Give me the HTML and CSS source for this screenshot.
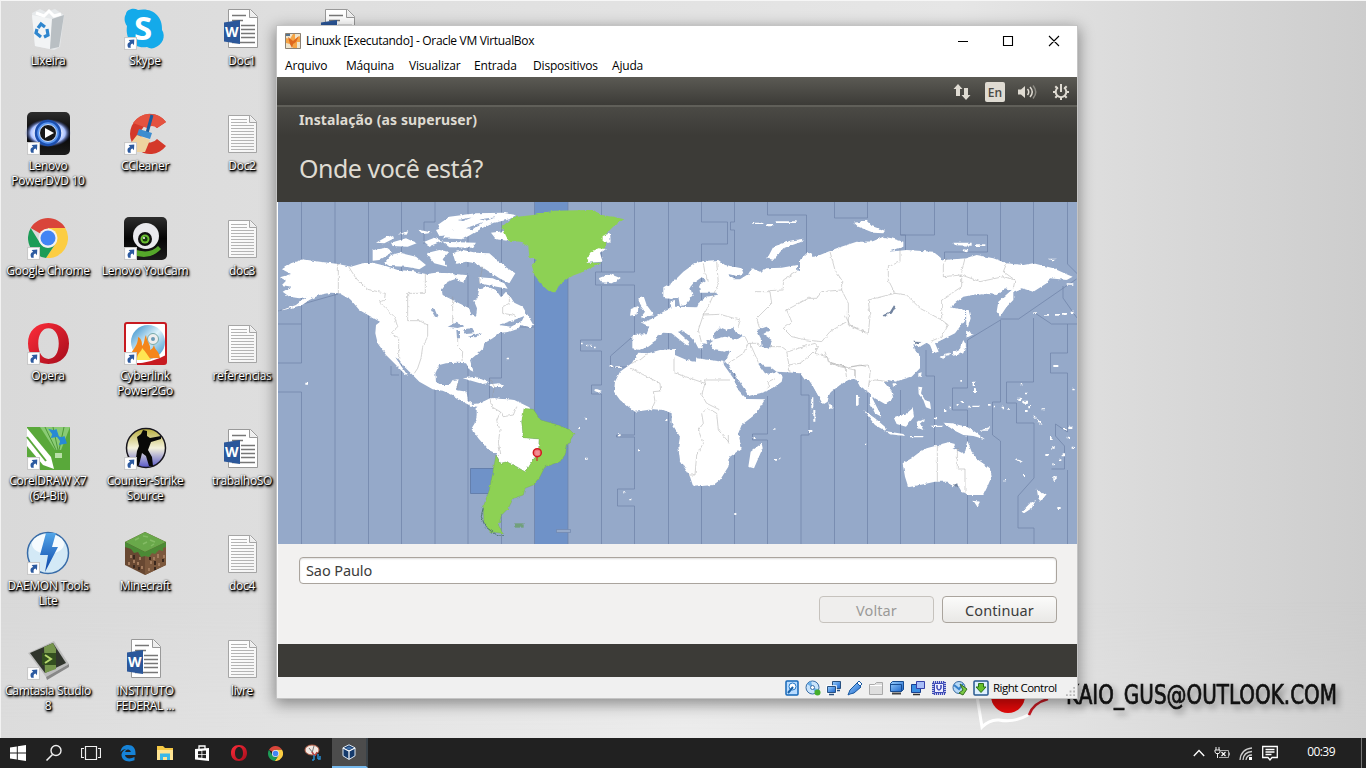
FILE: index.html
```html
<!DOCTYPE html>
<html lang="pt-BR">
<head>
<meta charset="utf-8">
<title>Linuxk [Executando] - Oracle VM VirtualBox</title>
<link rel="stylesheet" href="styles.css">
</head>
<body>
<svg class="defs" width="0" height="0">
  <defs>
    <linearGradient id="gPaper" x1="0" y1="0" x2="1" y2="1"><stop offset="0" stop-color="#fff"/><stop offset="1" stop-color="#f3f3f3"/></linearGradient>
    <linearGradient id="gBlack" x1="0" y1="0" x2="0" y2="1"><stop offset="0" stop-color="#2d2d2d"/><stop offset=".5" stop-color="#050505"/><stop offset="1" stop-color="#1d1d1d"/></linearGradient>
    <linearGradient id="gOpera" x1="0" y1="0" x2="1" y2="1"><stop offset="0" stop-color="#ff2d3a"/><stop offset="1" stop-color="#a50c1b"/></linearGradient>
    <radialGradient id="gEye"><stop offset=".5" stop-color="#fff"/><stop offset=".75" stop-color="#a9c0ff"/><stop offset="1" stop-color="#2b3f90" stop-opacity="0"/></radialGradient>
    <linearGradient id="gCs" x1="0" y1="0" x2="0" y2="1"><stop offset="0" stop-color="#b8ad3c"/><stop offset=".5" stop-color="#f4f2dc"/><stop offset="1" stop-color="#5656c8"/></linearGradient>
    <linearGradient id="gBolt" x1="0" y1="0" x2="0" y2="1"><stop offset="0" stop-color="#53a6e8"/><stop offset="1" stop-color="#0a43a8"/></linearGradient>
    <linearGradient id="gDisc" x1="0" y1="0" x2="1" y2="1"><stop offset="0" stop-color="#2586c7"/><stop offset=".5" stop-color="#dff3fb"/><stop offset="1" stop-color="#2b8dca"/></linearGradient>
    <linearGradient id="gBlue" x1="0" y1="0" x2="1" y2="1"><stop offset="0" stop-color="#9bd0ff"/><stop offset="1" stop-color="#1560c8"/></linearGradient>
    <symbol id="shortcut" viewBox="0 0 12 12"><rect x=".5" y=".5" width="11" height="11" fill="#fff" stroke="#c9c9c9"/><path d="M4 10C2.500 7 3.500 5 5.700 4.600L4.300 2.800 9.500 2.200 9.200 7.500 7.900 6C6 6.300 5.800 7.800 6.300 10Z" fill="#2c5aa0"/></symbol>
    <symbol id="txt" viewBox="0 0 48 48"><path d="M10.500 5.500h22l6 6v31h-28z" fill="url(#gPaper)" stroke="#a5a5a5"/><path d="M31.500 5.500v7h7" fill="#eee" stroke="#a5a5a5"/><path d="M13 9.500h16M13 12.500h16M13 15.500h23M13 18.500h23M13 21.500h23M13 24.500h23M13 27.500h23M13 30.500h23M13 33.500h23M13 36.500h23M13 39.500h23" stroke="#b4b4b4"/></symbol>
    <symbol id="doc" viewBox="0 0 48 48"><path d="M10.500 4.500h22l7 7v31h-29z" fill="#fff" stroke="#999"/><path d="M31.500 4.500v8h8" fill="#eee" stroke="#999"/><path d="M14 10.500h14M14 15.500h11M23 20.500h14M23 24.500h14M23 28.500h14M23 32.500h14M14 37.500h23" stroke="#777" stroke-width="1.500"/><path d="M6 17.500l16-2.500v24l-16-2.500z" fill="#2b579a"/><text x="7" y="32" class="wordmark">W</text></symbol>
    <symbol id="chrome" viewBox="0 0 40 40"><path d="M20 20L2.700 10A20 20 0 0 1 37.300 10H20Z" fill="#d9453a"/><path d="M20 10H37.300A20 20 0 0 1 18 40L28 25Z" fill="#fccd42"/><path d="M2.700 10L12 25A9 9 0 0 0 28 25L18 40A20 20 0 0 1 2.700 10" fill="#1c9c57"/><circle cx="20" cy="20" r="9.500" fill="#f1f1f1"/><circle cx="20" cy="20" r="7.500" fill="#4285f4"/></symbol>
    <symbol id="opera" viewBox="0 0 40 40"><path fill-rule="evenodd" d="M20 0C32 0 40 8 40 20S32 40 20 40 0 32 0 20 8 0 20 0M20 5C14 5 10 11 10 20S14 35 20 35 30 29 30 20 26 5 20 5" fill="url(#gOpera)"/></symbol>
    <filter id="coast" x="0" y="0" width="100%" height="100%" color-interpolation-filters="sRGB"><feTurbulence type="fractalNoise" baseFrequency=".25" numOctaves="2" seed="4" result="n"/><feDisplacementMap in="SourceGraphic" in2="n" scale="3" xChannelSelector="R" yChannelSelector="G"/></filter>
  </defs>
</svg>

<main class="desktop">
  <div class="wall-logo">
    <svg width="80" height="46" viewBox="970 690 80 46"><circle cx="1008" cy="696" r="17" fill="#e60a0a"/><path d="M976 690L982 727Q990 719 999 720 1014 723 1028 715" fill="none" stroke="#fff" stroke-width="3"/><path d="M1029 715Q1033 703 1048 699" fill="none" stroke="#c51b24" stroke-width="2.500"/></svg>
  </div>
  <div class="wall-text"><svg width="300" height="50" viewBox="1060 675 300 50"><text class="hand" x="1066" y="704" textLength="271" lengthAdjust="spacingAndGlyphs">KAIO_GUS@OUTLOOK.COM</text></svg></div>

  <section class="icons">
    <div class="item"><svg viewBox="0 0 48 48"><path d="M8 8l8-4 6 3 9-3 9 6-4 32-6 3-19-4z" fill="#e6e9eb"/><path d="M8 10l20 4-2 30-15-3z" fill="#f2f4f5"/><path d="M28 14l12-4-5 32-9 2z" fill="#b9bfc3"/><path d="M12 8l8 3 5-5 5 5 7-2" fill="none" stroke="#fff" stroke-width="3"/><path d="M14 23l3-4 4 3M23 24l1 6-4 2M17 32l-5-4 1-4" fill="none" stroke="#2f86ce" stroke-width="3.200"/></svg><span>Lixeira</span></div>
    <div class="item"><svg viewBox="0 0 48 48"><path d="M5 9C5 5 12 2 17 5 31 2 42 11 41 25c4 6 1 15-8 18-3 1-5 0-7-1C12 44 4 34 6 21 3 17 3 12 5 9" fill="#14aaea"/><text x="13" y="35" class="skype">S</text><use href="#shortcut" x="3" y="32" width="13" height="13"/></svg><span>Skype</span></div>
    <div class="item"><svg viewBox="0 0 48 48"><use href="#doc"/></svg><span>Doc1</span></div>
    <div class="item"><svg viewBox="0 0 48 48"><use href="#doc"/></svg></div>

    <div class="item"><svg viewBox="0 0 48 48"><rect x="3" y="2" width="43" height="43" rx="5" fill="url(#gBlack)"/><ellipse cx="24" cy="23" rx="23" ry="14" fill="url(#gEye)"/><circle cx="24" cy="23" r="12" fill="#5a97f2" stroke="#1c4fae" stroke-width="2.500"/><circle cx="24" cy="23" r="8.500" fill="#181818" stroke="#cfe2ff"/><path d="M21 18l9 5-9 5z" fill="#fff"/><use href="#shortcut" x="3" y="32" width="13" height="13"/></svg><span>Lenovo<br>PowerDVD 10</span></div>
    <div class="item"><svg viewBox="0 0 48 48"><path d="M45 12A20 20 0 1 0 45 36L36 29A9 9 0 1 1 36 18Z" fill="#d4382a"/><path d="M45 12A20 20 0 0 0 12 13L26 18Q31 14 36 18Z" fill="#e4523f"/><path d="M31 5L26 23" stroke="#1c5c9c" stroke-width="3"/><path d="M18 19l13 4-2 6-13-4z" fill="#3c8dd0"/><path d="M16 25l13 5-5 12H10L6 38z" fill="#eed29f"/><use href="#shortcut" x="3" y="32" width="13" height="13"/></svg><span>CCleaner</span></div>
    <div class="item"><svg viewBox="0 0 48 48"><use href="#txt"/></svg><span>Doc2</span></div>
    <i></i>

    <div class="item"><svg viewBox="0 0 48 48"><use href="#chrome" x="4" y="3" width="40" height="40"/><use href="#shortcut" x="3" y="32" width="13" height="13"/></svg><span>Google Chrome</span></div>
    <div class="item"><svg viewBox="0 0 48 48"><rect x="3" y="2" width="43" height="43" rx="5" fill="url(#gBlack)"/><path d="M10 39Q28 47 40 34L37 31Q29 40 12 34Z" fill="#55a72a"/><circle cx="25" cy="21" r="13" fill="#e9e9ed"/><circle cx="24" cy="24" r="7" fill="#111"/><circle cx="24" cy="24" r="4.500" fill="#69bd31"/><circle cx="24" cy="24" r="2.500" fill="#173b0d"/><circle cx="23" cy="23" r="1" fill="#fff"/><use href="#shortcut" x="3" y="32" width="13" height="13"/></svg><span>Lenovo YouCam</span></div>
    <div class="item"><svg viewBox="0 0 48 48"><use href="#txt"/></svg><span>doc3</span></div>
    <i></i>

    <div class="item"><svg viewBox="0 0 48 48"><use href="#opera" x="4" y="3" width="41" height="41"/><use href="#shortcut" x="3" y="32" width="13" height="13"/></svg><span>Opera</span></div>
    <div class="item"><svg viewBox="0 0 48 48"><rect x="4" y="3" width="41" height="41" rx="2" fill="#fff" stroke="#c71a20" stroke-width="2"/><circle cx="27" cy="22" r="17" fill="url(#gDisc)"/><circle cx="32" cy="19" r="5.500" fill="#eee" stroke="#7aa" stroke-width="1"/><circle cx="32" cy="19" r="2" fill="#6c9bb6"/><path d="M10 39C8 30 17 29 17 17c4 2 4 6 4 9 3-3 2-8 4-11 1 8 5 9 4 15 3-1 3-3 4-5 1 6 5 5 6 13z" fill="#f4861a"/><path d="M16 40c0-8 5-8 5-12 4 4 6 8 9 12z" fill="#ffe552"/><path d="M12 44Q33 42 45 35v9z" fill="#c71a20"/><use href="#shortcut" x="3" y="32" width="13" height="13"/></svg><span>Cyberlink<br>Power2Go</span></div>
    <div class="item"><svg viewBox="0 0 48 48"><use href="#txt"/></svg><span>referencias</span></div>
    <i></i>

    <div class="item"><svg viewBox="0 0 48 48"><path d="M3 2h43v43H3z" fill="#59a83a"/><path d="M16 2h30L37 25h-6z" fill="#8acb74"/><path d="M21 2l11 23M29 2l5 23M40 2l-5 23" stroke="#4d9838"/><path d="M3 3l24 29 3 12-11-4L3 21z" fill="#fff"/><path d="M3 12l19 24" stroke="#59a83a" stroke-width="2"/><path d="M26 5l4 1 2-1 2 6-6 1 1-3zM34 12l4 1 2-1 2 6-6 1 1-3z" fill="#278ad4" stroke="#278ad4" stroke-width="1.500"/><path d="M31 28h7v5h-7z" fill="#b8dfa8"/><use href="#shortcut" x="3" y="32" width="13" height="13"/></svg><span>CorelDRAW X7<br>(64-Bit)</span></div>
    <div class="item"><svg viewBox="0 0 48 48"><circle cx="25" cy="23" r="19.500" fill="url(#gCs)" stroke="#17151d" stroke-width="1.500"/><path d="M22 5l4 1v5l3 2 11-2v3l-10 3-3 8 4 7 1 9h-4l-3-10-4-3-3 12h-4l2-14 2-5-2-9 4-3z" fill="#080808"/><use href="#shortcut" x="3" y="32" width="13" height="13"/></svg><span>Counter-Strike<br>Source</span></div>
    <div class="item"><svg viewBox="0 0 48 48"><use href="#doc"/></svg><span>trabalhoSO</span></div>
    <i></i>

    <div class="item"><svg viewBox="0 0 48 48"><circle cx="24" cy="23" r="20.500" fill="#d3e9f6" stroke="#386ca8" stroke-width="1.500"/><ellipse cx="24" cy="14" rx="16" ry="10" fill="#f5fbfe"/><path d="M22 3h10l-4 14h6L21 42l3-17h-8z" fill="url(#gBolt)"/><use href="#shortcut" x="3" y="32" width="13" height="13"/></svg><span>DAEMON Tools<br>Lite</span></div>
    <div class="item"><svg viewBox="0 0 48 48"><path d="M4 12L24 2l21 10v23L24 45 4 35z" fill="#684832"/><path d="M24 22l21-10v23L24 45z" fill="#7c583d"/><path d="M4 12L24 2l21 10-21 10z" fill="#69a84a"/><path d="M4 12l20 10 21-10v5l-3 1v3l-4-1-4 4-3-1-3 4-4-1-4 1-3-5-4 1-3-4-6-2z" fill="#4b8a35"/><path d="M9 25h2v3H9zM16 32h2v3h-2zM7 32h2v3H7zM18 27h2v3h-2zM12 30h2v3h-2zM20 36h2v3h-2zM29 31h2v3h-2zM36 24h2v4h-2zM37 33h2v3h-2zM27 38h2v3h-2zM42 25h2v3h-2zM32 27h2v3h-2z" fill="#a37b5d"/><path d="M12 25h2v4h-2zM12 35h2v3h-2zM17 37h2v3h-2zM33 31h2v4h-2zM41 29h2v3h-2zM28 27h2v3h-2zM33 37h2v3h-2z" fill="#3b281e"/><path d="M14 10l4-2M22 14l4-2M29 10l5 2M22 6l5 1M30 16l3-2" stroke="#83bb64" stroke-width="1.500"/></svg><span>Minecraft</span></div>
    <div class="item"><svg viewBox="0 0 48 48"><use href="#txt"/></svg><span>doc4</span></div>
    <i></i>

    <div class="item"><svg viewBox="0 0 48 48"><path d="M4 18l26-12 15 23-23 13z" fill="#bdbdbd"/><path d="M22 42l23-13v3L23 45z" fill="#888"/><path d="M6 18l23-10 13 20-21 10z" fill="#30352c"/><path d="M20 12l9-4 3 6v20l-11 4z" fill="#75954c"/><path d="M18 18h14v12H18z" fill="#334f1f"/><path d="M21 20l6 4-6 4" fill="none" stroke="#b8d96e" stroke-width="2"/><use href="#shortcut" x="3" y="32" width="13" height="13"/></svg><span>Camtasia Studio<br>8</span></div>
    <div class="item"><svg viewBox="0 0 48 48"><use href="#doc"/></svg><span>INSTITUTO<br>FEDERAL ...</span></div>
    <div class="item"><svg viewBox="0 0 48 48"><use href="#txt"/></svg><span>livre</span></div>
    <i></i>
  </section>

  <section class="window">
    <header class="titlebar">
      <svg class="vm" width="16" height="16" viewBox="0 0 16 16"><path d="M.5.500h15v15H.500z" fill="#f6a546" stroke="#8b8175"/><path d="M1 1h7l-3 5-4-1zM10 1h5v2l-5 3zM1 10l4 1 3 4H1zM12 9h3v6h-3z" fill="#eee4cc"/><path d="M3 4l5 4 6-5-3 6-3 2-1 4-2-4z" fill="#df681e"/><path d="M1 1h4v2H1z" fill="#57738c"/></svg>
      <span class="title">Linuxk [Executando] - Oracle VM VirtualBox</span>
      <svg class="controls" width="110" height="20" viewBox="0 0 110 20"><path d="M5 10.500h10M50.500 5.500h9v9h-9zM96 5l10 10M106 5L96 15" fill="none" stroke="#000" stroke-width="1.100"/></svg>
    </header>
    <nav class="menu"><span class="m1">Arquivo</span><span class="m2">Máquina</span><span class="m3">Visualizar</span><span class="m4">Entrada</span><span class="m5">Dispositivos</span><span class="m6">Ajuda</span></nav>
    <div class="panel">
      <svg width="18" height="18" viewBox="0 0 18 18"><path d="M5 1l4.500 5H7v7H3V6H.500zM13 17l-4.500-5H11V5h4v7h2.500z" fill="#dfdbd2"/></svg>
      <b class="lang">En</b>
      <svg width="20" height="18" viewBox="0 0 20 18"><path d="M1 6.500h3l4-3.500v12l-4-3.500H1z" fill="#dfdbd2"/><path d="M10.500 6q2.500 3 0 6M13 4q4.500 5 0 10" fill="none" stroke="#dfdbd2" stroke-width="1.500"/><path d="M16 2.500q5.500 6.500 0 13" fill="none" stroke="#8c8a83" stroke-width="1.500"/></svg>
      <svg width="18" height="18" viewBox="0 0 18 18"><path d="M6 4.500a5.300 5.300 0 1 0 6 0" fill="none" stroke="#dfdbd2" stroke-width="2"/><path d="M9 1v8M1 9h3M14 9h3M9 14v3M3.300 3.300l2 2M14.700 3.300l-2 2M3.300 14.700l2-2M14.700 14.700l-2-2" stroke="#dfdbd2" stroke-width="2"/></svg>
    </div>
    <div class="installer">
      <h1>Instalação (as superuser)</h1>
      <h2>Onde você está?</h2>
    </div>
    <svg class="map" width="799" height="342" viewBox="278 202 799 342">
      <path d="M278 202h799v342H278z" fill="#95a9c9"/>
      <path d="M534.500 202H568v342H534.500z" fill="#6f92c8"/>
      <path d="M470.500 468.500h32v25h-32z" fill="#6f92c8" stroke="#5873a0" stroke-width=".7"/>
      <g class="zones">
        <path d="M301.500 202v122H278M278 363h23.500v-39M278 392h23.500v152M335 202v342M368.500 202v342M401.500 202v342M435 202v20h-11v22M435 385v159M468 202v342M501.500 202v176h-12v25l12 20v121M534.500 202v342M568 202v342M601.500 202v70M601.500 286v54h-21v11h21v34h-10v9h10v150M634.500 202v70h-39v13h39v50l-24 21v11h24v68h-18v2h18v52h-17v17h17v39M668.500 202v342M701.500 202v20h26v22h-26v300M734.500 202v20h-4v8h4v314M767.500 202v13h39v46M767.500 396v38h-15v6h15v104M801 370v25h8v40h-8v109M834.500 202v16h33v-16M834.500 385v159M867.500 370v174M900.500 202v33h5v15M900.500 235h34v-33M900.500 390v154M926 350v26h8.500v168M967.500 202v33h20v17h-43v15M967.500 340v48h-15v22h15v134M967.500 340l33-20v82h-8v33l8 6v103M1000.500 202v60M1033.500 202v64M1033.500 318v64h-27v21h10v20h17.500v55l-16 18v32h16v16M1000.500 319h18l58-40M1033.500 312l18 12h26M1067.500 202v62l10 10M1063 286v12l14 20M1067.500 324v29h-17v20h17v59l-12-8v12l9 10v23h-13M1067.500 470v74M278 311l60-17M391 366v9h8M520 327h14"/>
      </g>
      <g filter="url(#coast)">
        <g transform="translate(276 200) scale(.33333)" fill="#fff">
          <path d="M18 208L45 190 80 178 120 184 187 192 225 200 260 190 290 188 330 198 365 210 410 214 450 222 480 218 530 220 545 235 515 245 497 270 500 285 530 300 560 315 580 325 585 345 600 350 603 325 595 305 605 290 610 265 635 260 660 270 675 292 690 275 700 285 715 308 740 320 755 345 772 375 765 382 735 375 725 387 700 395 670 400 650 415 625 430 622 445 600 465 582 480 592 515 582 510 570 490 545 488 510 490 490 495 478 520 480 545 495 555 520 555 530 540 548 538 540 570 572 575 575 600 590 612 612 610 610 622 585 618 560 605 530 585 500 572 470 568 430 545 410 525 385 500 370 480 358 472 396 528 386 522 355 490 330 465 305 430 298 400 300 375 312 365 285 350 250 330 225 300 190 280 165 278 130 285 100 300 80 314 40 326 8 333 60 315 92 290 70 295 40 290 20 275 45 260 18 255 30 242 12 232 45 222Z"/>
          <path d="M485 75L520 50 600 40 680 38 720 45 700 58 640 72 600 95 560 118 500 115 530 90 490 88ZM530 160L560 150 600 158 640 160 680 195 718 220 700 250 670 235 640 215 600 190 570 185 540 192ZM610 232L650 235 685 250 695 266 650 258 610 250ZM325 188L345 165 370 158 420 170 450 195 430 208 390 200 340 198ZM290 150L330 143 348 158 310 180 290 182ZM345 128L390 115 422 130 395 140 350 138ZM300 128L340 106 355 115 325 130ZM365 103L397 94 392 104ZM425 88L468 98 440 102ZM445 125L475 113 500 123 460 139ZM450 160L490 150 520 155 500 178 515 200 475 190ZM500 125L600 128 590 143 520 142ZM480 90L540 70 520 105 490 108ZM645 98L685 93 700 123 660 118ZM535 222L570 225 565 248 545 242ZM560 535L600 530 640 548 620 552ZM640 553L670 550 685 560 650 562ZM88 548h8v6h-8zM692 473h7v5h-7zM610 610L650 595 715 600 760 622 780 660H600Z"/>
          <path fill="#95a9c9" d="M515 380L540 368 565 378 545 384ZM541 390h11v25h-9zM560 388L590 385 595 400 570 402ZM575 410L605 402 618 400 600 412ZM465 330L475 325 486 352 477 350ZM670 375L720 358 745 348 738 362 705 380ZM565 205L590 195 612 215 640 225 600 235 575 225ZM545 60L590 52 560 64ZM570 85L620 66 590 88ZM610 58L660 52 630 62Z"/>
        </g>
        <g transform="translate(470 200) scale(.33333)">
          <path fill="#fff" d="M20 615L60 595 130 600 162 625 155 665 160 713 207 717 206 760 180 790 165 815 140 800 110 785 92 790 78 760 55 750 25 715 5 685 20 660Z"/>
          <path fill="#8dd154" d="M95 80L130 52 190 45 250 32 370 30 395 45 430 50 463 58 435 75 410 100 408 140 350 188 395 188 340 215 300 230 268 255 255 278 235 272 210 250 195 230 185 195 200 180 178 170 175 140 150 125 115 122Z"/>
          <path fill="#fff" d="M350 188L360 158 385 145 408 147 390 160 398 185ZM398 108L420 100 422 125 398 125ZM385 235L420 222 452 235 425 250 395 247Z"/>
          <path fill="#8dd154" stroke="#71a54c" stroke-width="1" d="M162 625L190 628 212 660 265 675 300 690 312 702 292 735 285 765 270 785 225 800 210 830 190 855 165 865 160 885 130 895 115 925 95 945 85 975 98 1000 60 995 42 965 40 920 58 870 68 820 78 765 92 790 110 785 140 800 165 815 180 790 206 760 207 717 160 713 155 665Z"/>
          <path fill="#71a07c" d="M133 970h28v13h-28z"/>
          <path fill="none" stroke="#4f7570" stroke-width="3" d="M40 925L34 950 46 980 85 1008 102 1007"/>
          <path fill="#fff" d="M483 327L505 318 503 343 480 347ZM505 295L522 292 530 315 552 345 510 355 525 335 512 318ZM333 428h5v5h-5zM350 434h5v5h-5zM361 434h5v5h-5zM372 440h5v5h-5zM372 572l8-5 15 5-8 6zM346 653h5v6h-5zM325 681h5v6h-5zM345 773h8v6h-8zM444 703h8v6h-8zM501 748h6v6h-6zM460 874h6v6h-6zM478 895h6v6h-6zM422 495h8v6h-8zM436 499h18v5h-18zM793 939h6v6h-6zM586 657h6v6h-6z"/>
        </g>
        <g transform="translate(600 200) scale(.33333)" fill="#fff">
          <path d="M190 290L190 262 220 245 250 215 285 190 310 183 355 180 375 195 425 205 430 220 410 228 385 222 400 238 420 238 445 222 455 205 480 215 500 205 545 203 590 195 592 210 620 222 640 218 640 205 610 210 600 180 620 160 635 160 640 190 660 205 685 200 650 185 655 165 680 168 700 153 730 150 735 140 800 125 870 125V520L840 560 810 580 795 570 775 550 770 535 745 540 720 555 688 580 683 605 672 612 660 595 640 560 635 540 615 540 600 520 560 517 530 515 510 500 495 500 480 488 475 492 495 520 515 522 530 515 548 530 545 545 515 568 480 580 445 588 435 570 410 530 385 495 375 485 392 450 375 455 340 450 330 430 340 422 318 420 322 432 310 430 308 445 295 445 285 425 265 405 245 390 235 397 268 425 262 437 240 420 215 400 190 398 175 405 165 425 145 440 120 450 97 445 97 405 140 403 148 380 125 368 160 355 190 335 215 325 208 305 225 300 225 320 290 322 295 310 320 290 350 285 350 278 300 278 297 255 318 240 305 232 280 250 270 262 278 285 255 315 240 318 235 290 215 297 195 295Z"/>
          <path d="M115 458L145 460 180 450 225 447 225 465 260 480 285 485 290 475 330 480 370 485 372 495 400 535 415 570 440 597 495 598 470 640 425 675 415 700 425 745 390 770 385 800 360 840 340 855 280 860 270 830 240 780 235 740 240 710 215 670 215 640 190 630 160 628 105 635 60 600 42 575 45 545 60 515 95 490ZM485 730L488 745 462 805 445 800 452 755ZM502 175L520 140 570 122 610 116 605 125 550 145 520 180ZM685 605L697 620 690 628ZM460 68h30v4h-30zM500 72h22v4h-22zM530 64h60v5h-60zM634 595h6v30h-6zM640 630h6v35h-6zM628 690h9v6h-9zM520 684h6v6h-6zM535 772h6v6h-6zM522 777h6v5h-6zM461 711h6v6h-6zM770 590h6v25h-6z"/>
          <path fill="#95a9c9" d="M342 400L360 382 380 390 400 383 407 397 432 410 410 418 375 410 343 418ZM470 390L500 380 510 390 490 402 515 420 510 446 485 440 482 415Z"/>
        </g>
        <g transform="translate(820 200) scale(.33333)" fill="#fff">
          <path d="M0 165L50 145 110 125 155 125 190 110 215 115 250 125 250 140 205 155 260 150 340 155 370 180 440 175 470 165 520 175 560 190 610 195 640 190 700 205 745 225 758 230 740 240 690 235 680 250 640 275 605 265 580 275 580 300 560 320 540 350 530 335 535 305 575 270 555 265 530 285 485 280 430 290 390 322 435 330 435 360 405 400 365 420 345 430 356 455 340 460 330 435 320 428 300 440 280 432 285 450 300 470 300 505 275 530 225 545 205 540 195 550 215 575 220 595 195 612 165 595 155 590 170 620 187 652 165 640 150 610 150 580 140 565 120 560 110 540 85 530 70 540 35 570 20 600 8 612-20 560-60 500V180Z"/>
          <path d="M248 790L275 775 300 755 320 745 345 738 355 742 365 732 385 727 405 732 398 745 425 758 435 755 442 722 455 755 475 780 510 805 515 830 500 865 490 885 450 885 425 875 412 853 398 862 385 845 345 845 300 855 265 862 255 830ZM460 902L480 905 472 920ZM650 865L665 880 680 882 662 905 655 895ZM648 900L635 925 612 940 605 935 630 910ZM130 630L165 655 200 685 195 692 165 675ZM195 693L250 702 255 708 210 703ZM222 655L260 640 278 625 282 650 258 680 230 672ZM290 665L305 660 318 658 300 670 310 690 295 685ZM370 668L395 670 440 680 465 695 495 718 460 708 430 705 400 690ZM480 692L510 680 505 692ZM295 560L307 562 303 580 315 600 330 605 333 628 318 622 310 600 296 582ZM295 520L305 517 302 535 295 530ZM218 550h14l-5 9-9-3zM438 330L446 330 452 355 444 382 439 378ZM438 392L462 402 440 413ZM430 420L438 435 430 460 400 467 393 460 420 446ZM362 470L375 465 370 478ZM372 462L390 458 388 466 374 467ZM102 68L140 62 155 78 195 92 190 100 160 98 115 80ZM400 128L455 128 455 137 405 136ZM468 133h28v5h-28zM430 148l18 3-8 6-12-4zM685 176l22 0-5 6zM270 708h40v4h-40zM335 677h35v4h-35zM740 250h20v4h-20zM108 585h6v32h-6zM28 610l10 14-8 4z"/>
          <path d="M422 603h10v6h-10zM410 612h6v5h-6zM445 617h7v6h-7zM460 617h18v4h-18zM504 612h8v5h-8zM520 617h5v5h-5zM545 620h7v5h-7zM565 624h5v5h-5zM595 596h9v7h-9zM610 602h14v9h-14zM625 618h8v7h-8zM615 630h8v6h-8zM640 645l10 8 18 22-8-3-18-22zM665 625h10v6h-10zM690 708h8v12h-8zM676 762h9v6h-9zM697 740h7v6h-7zM725 760h10v9h-10zM719 775h8v8h-8zM697 790h6v6h-6zM700 828h7v14h-7zM745 677h12v10h-12zM728 684h12v5h-12zM740 710h10v5h-10zM755 740h7v6h-7zM588 775l17 10-3 3-17-10zM610 822h5v6h-5zM551 840h5v6h-5zM700 495h15v6h-15zM712 921h10v6h-10zM640 337h11v5h-11zM675 342h12v5h-12zM705 342h12v5h-12zM726 339h15v5h-15zM752 335h12v5h-12zM458 545h7v12h-7zM462 565h6v14h-6zM421 540h5v5h-5zM600 551h7v5h-7zM615 578h6v5h-6zM757 566h7v5h-7zM372 630h7v6h-7zM387 620h6v5h-6zM345 653h6v5h-6zM135 728h5v5h-5z"/>
          <path fill="#71839f" d="M188 346L210 335 222 316 226 320 217 338 192 350ZM280 425L308 426 285 432ZM400 855L412 850 412 863Z"/>
        </g>
        <g class="borders" transform="translate(276 200) scale(.33333)"><path d="M187 190V280M218 200L240 235 275 268 328 280 325 302 310 305 355 350 365 380 345 400 368 415V480M448 222V280H395V362H430L455 375 455 410 440 440 435 475 425 505 415 520M530 290V370M545 415L545 440 560 455 558 485M700 280L700 310 680 320 680 340 710 345 720 350M545 550V570M640 535L655 560 650 590M610 250L620 200"/></g>
        <g class="borders" transform="translate(470 200) scale(.33333)"><path d="M60 597L65 620 90 635 80 660 90 690 85 730 92 760 82 770M90 635L100 650 130 645 140 620M483 505L570 550 572 573 550 575 555 605 545 628M612 475V518L705 550V540H780M705 550L695 585 710 610 750 630M700 635L715 625 740 640 745 690 775 725M695 640L700 670 685 690 700 730 680 765 675 825 655 825M775 730V705M485 490L510 480 535 460"/></g>
        <g class="borders" transform="translate(600 200) scale(.33333)"><path d="M310 190L315 220 325 245M350 185L355 250 340 285M340 285L325 320 310 345 295 390 305 430M310 345L360 343 420 360 415 380M465 275L510 275 515 310 470 355 480 385M505 272L550 270 550 240 590 215M690 155L705 210 725 240 725 270 665 275 650 295 625 295 560 330 575 365 550 385 575 410 620 420 665 425 690 395 740 365M725 270L745 310 745 375 800 400M435 410L445 430 475 430 480 440M445 430L430 460 385 490M450 430L470 475 475 488M510 440L545 440 565 455 610 440 645 430 655 440 625 470 600 490 565 495M560 455L570 517M655 440L645 460 680 470 695 490 745 503 780 495 800 500M690 490L720 500 765 510 765 535M505 565L505 545 525 535"/></g>
        <g class="borders" transform="translate(820 200) scale(.33333)"><path d="M240 145L240 185 205 200 205 240 225 280 185 290 145 300 150 350 145 400 90 375 75 345M225 280L260 285 300 325 365 360 385 375 365 410 330 425M365 360L365 300 425 260 425 225 370 230 370 195 380 175M425 225L480 245 550 230 585 240 580 265M560 190L550 215 585 240M435 175L425 215M352 740V845M412 745V807H435V878M148 545L165 540 205 545M85 500L145 495 150 520 145 565M15 455L25 485 75 500 80 535M105 505V530"/></g>
      </g>
      <path d="M556.500 529.500h14v3h-14z" fill="#95a9c9" stroke="#6d83a9" stroke-width=".6"/>
      <path d="M537 455v6" stroke="#d21a20"/><circle cx="537.300" cy="452.700" r="4" fill="#ee767c" stroke="#d21a20" stroke-width="1.500"/><path d="M535.500 452h4M535.500 454h4" stroke="#f7c2c4" stroke-width=".7"/>
    </svg>
    <div class="form">
      <div class="field">Sao Paulo</div>
      <div class="actions"><button class="off">Voltar</button><button>Continuar</button></div>
    </div>
    <div class="dark"></div>
    <footer class="status">
      <svg viewBox="0 0 16 16"><rect x="2" y="1" width="12" height="14" rx="1" fill="#b9dcff" stroke="#1567b8" stroke-width="1.500"/><circle cx="8.500" cy="6.500" r="3.500" fill="#fff" stroke="#2279c9"/><path d="M4 13l5-6" stroke="#1761a8" stroke-width="2"/></svg>
      <svg viewBox="0 0 16 16"><circle cx="7.500" cy="7.500" r="6.500" fill="#c8e3fb" stroke="#3a6ea5"/><path d="M7.500 7.500L2 4l4-3zM7.500 7.500l6 2-3 4z" fill="#69ade8"/><circle cx="7.500" cy="7.500" r="2" fill="#fff" stroke="#3a6ea5"/><circle cx="12.500" cy="12.500" r="3" fill="#45ae2c"/></svg>
      <svg viewBox="0 0 16 16"><path d="M6.500 1.500h8v7h-8z" fill="url(#gBlue)" stroke="#285080"/><path d="M1.500 6.500h8v6h-8z" fill="url(#gBlue)" stroke="#fff" stroke-width="2.500"/><path d="M1.500 6.500h8v6h-8z" fill="url(#gBlue)" stroke="#285080"/><path d="M3 14.500h5M11 10.500h3" stroke="#285080" stroke-width="1.500"/></svg>
      <svg viewBox="0 0 16 16"><path d="M1 15l2-5 7-7 4 4-7 6-4 1z" fill="url(#gBlue)" stroke="#1858a0"/><path d="M10 3l2-2 3 3-2 2z" fill="#fff" stroke="#1858a0"/></svg>
      <svg viewBox="0 0 16 16"><path d="M1.500 14.500v-10h5l2-2h6v12z" fill="#dedede" stroke="#aaa"/><path d="M2 5.500h12" stroke="#fff"/></svg>
      <svg viewBox="0 0 16 16"><path d="M1.500 3.500l2-2h11v8l-2 2h-11z" fill="url(#gBlue)" stroke="#174b8f"/><path d="M1.500 4.500h11v7" fill="none" stroke="#174b8f"/><path d="M3 13.500h9" stroke="#444" stroke-width="2"/></svg>
      <svg viewBox="0 0 16 16"><path d="M1.500 4.500h9v8h-9z" fill="#3a8de0" stroke="#183f8f"/><path d="M6.500 1.500h8v7h-8z" fill="#a8bdf7" stroke="#3640a8"/><path d="M3 14.500h7" stroke="#333" stroke-width="1.500"/></svg>
      <svg viewBox="0 0 16 16"><path d="M2 2h12v12H2z" fill="#dfe4ff" stroke="#3b48b4" stroke-width="2" stroke-dasharray="1.200 .8"/><path d="M3.500 3.500h9v9h-9z" fill="#eef" stroke="#3b48b4"/><path d="M6 5v3q2 4 4 0V5" fill="none" stroke="#3b48b4" stroke-width="1.500"/></svg>
      <svg viewBox="0 0 16 16"><circle cx="7" cy="7.500" r="6" fill="#b5d8f6" stroke="#396aa0"/><path d="M2 5l5 4 4-5" fill="none" stroke="#3781ca" stroke-width="2"/><path d="M8 4l7 5-4 6-4-2 4-3z" fill="#79c843" stroke="#376d20"/></svg>
      <svg viewBox="0 0 16 16"><rect x="1" y="1" width="14" height="14" rx="1" fill="#dff0ff" stroke="#275890" stroke-width="1.500"/><path d="M5.500 3.500h5V7H13l-5 5.500L3 7h2.500z" fill="#66bf2b" stroke="#2b7218"/></svg>
      <span>Right Control</span>
      <svg class="grip" viewBox="0 0 10 10"><path d="M8 0h2v2H8zM4 4h2v2H4zM8 4h2v2H8zM0 8h2v2H0zM4 8h2v2H4zM8 8h2v2H8z" fill="#b5b5b5"/></svg>
    </footer>
  </section>
</main>

<footer class="taskbar">
  <div class="tb"><svg width="18" height="18" viewBox="0 0 18 18"><path d="M1 3.500L7.800 2.500V8.500H1zM8.800 2.300L17 1v7.500H8.800zM1 9.500h6.800v6L1 14.500zM8.800 9.500H17V17l-8.200-1.300z" fill="#fff"/></svg></div>
  <div class="tb"><svg width="18" height="18" viewBox="0 0 18 18"><circle cx="11" cy="6.500" r="5" fill="none" stroke="#eee" stroke-width="1.400"/><path d="M7.500 10.500L1.500 16.500" stroke="#eee" stroke-width="1.600"/></svg></div>
  <div class="tb"><svg width="20" height="18" viewBox="0 0 20 18"><path d="M4.500 2.500h11v13h-11zM3 4.500H.500v9H3M17 4.500h2.500v9H17" fill="none" stroke="#eee" stroke-width="1.200"/></svg></div>
  <div class="tb"><svg width="18" height="18" viewBox="0 0 18 18"><path d="M1.500 8C2 3.500 5 1 9 1c5 0 7.500 3.500 7.500 8v2H6c.5 4 5.500 4.200 9.500 2v3.300C9 19 2.300 16.500 2.500 10.500 3 7.500 5 5.800 7.500 5 5 5 3 6 1.500 8M6.200 8h5.600C11.500 4.500 6.500 4.500 6.200 8" fill="#1683d8" fill-rule="evenodd"/></svg></div>
  <div class="tb"><svg width="18" height="18" viewBox="0 0 18 18"><path d="M1 2h6l2 2h8v12H1z" fill="#f6c945"/><path d="M1 6h16v10H1z" fill="#ffe593"/><path d="M4 16V9.500h10V16h-3v-3H7v3z" fill="#39b8e8"/></svg></div>
  <div class="tb"><svg width="18" height="18" viewBox="0 0 18 18"><path d="M6 5V2h6v3" fill="none" stroke="#fff" stroke-width="1.300"/><path d="M2 5l14-1v13L2 15.500z" fill="#fff"/><path d="M5 7.200l3.500-.3v3H5zM9.300 6.800l3.700-.3v3.400H9.300zM5 10.800h3.500v3L5 13.500zM9.300 10.800H13v3.400l-3.700-.3z" fill="#222"/></svg></div>
  <div class="tb"><svg width="16" height="16"><use href="#opera" width="16" height="16"/></svg></div>
  <div class="tb"><svg width="15" height="15"><use href="#chrome" width="15" height="15"/></svg></div>
  <div class="tb"><svg width="18" height="18" viewBox="0 0 18 18"><ellipse cx="8" cy="6" rx="7" ry="5" fill="#f3e8e2" stroke="#b45d45"/><path d="M5 4l4 5M10 2L8 9" stroke="#777"/><path d="M8 8l2 3M13 8l-2 4" stroke="#b44" stroke-width="1.500"/><path d="M10 11v5M14 10v5M10 16h-2M14 15h2v-3" fill="none" stroke="#2a8ccf" stroke-width="1.500"/></svg></div>
  <div class="tb active"><svg width="16" height="16" viewBox="0 0 16 16"><path d="M8 .8l6 3v8l-6 3.700-6-3.700v-8z" fill="#153a6b" stroke="#dce8f5"/><path d="M2 4l6 3 6-3M8 7v8" fill="none" stroke="#fff" stroke-width="1.200"/><path d="M8 2.500l3.500 1.700L8 5.800 4.500 4.200z" fill="#3e6ea8"/></svg></div>
  <div class="tray">
    <svg width="12" height="16" viewBox="0 0 12 16"><path d="M.8 11L6 5.500 11.200 11" fill="none" stroke="#fff" stroke-width="1.300"/></svg>
    <svg width="16" height="16" viewBox="0 0 16 16"><path d="M2 2v3M5 2v3M1 5h5v2L5 8.500H2L1 7zM3.500 8v5" fill="none" stroke="#eee"/><path d="M6 5.500h8.500v7H5M15.500 7.500v3" fill="none" stroke="#aaa"/><path d="M7.500 7l4 4M11.500 7l-4 4" stroke="#fff" stroke-width="1.100"/></svg>
    <svg width="14" height="16" viewBox="0 0 14 16"><path d="M1 15Q2 4 13 3M4 15Q4.500 7 13 6.500M7 15q.5-5 6-5" fill="none" stroke="#ccc" stroke-width="1.300"/><path d="M10 12h3v3h-3z" fill="#fff"/></svg>
    <svg width="16" height="18" viewBox="0 0 16 18"><path d="M.700 2.500h14.600v11H10L8 16l-2-2.500H.700zM3.500 5.500h9M3.500 8h9M3.500 10.500h6" fill="none" stroke="#fff" stroke-width="1.300"/></svg>
    <time>00:39</time>
  </div>
</footer>
</body>
</html>
```
FILE: styles.css
```css
* { box-sizing: border-box; }
body { margin: 0; width: 1366px; height: 768px; overflow: hidden; display: flex; flex-direction: column; font-family: "Open Sans", "Noto Sans", sans-serif; }
.defs { position: absolute; }
.desktop { position: relative; height: 738px; border-top: 1px solid #f6f6f6; border-left: 1px solid #f2f2f2; background: linear-gradient(90deg, #d9d9d9 0, #dedede 20%, #e6e6e6 70%, #dadada 84%, #cdcdcd 100%); }
.desktop::before { content: ""; position: absolute; inset: 600px 0 0 0; background: linear-gradient(90deg, #dcdcdc, #ececec 50%, #e2e2e2 78%, #d0d0d0); -webkit-mask-image: linear-gradient(transparent, #000); mask-image: linear-gradient(transparent, #000); }
.wall-logo { position: absolute; left: 969px; top: 689px; }
.wall-text { position: absolute; left: 1059px; top: 674px; }
.hand { font: 400 26px "DejaVu Sans Condensed", "DejaVu Sans", sans-serif; fill: #111; stroke: #111; stroke-width: .7px; filter: drop-shadow(3px 4px 3px #0006); }
.icons { position: relative; display: grid; width: 388px; grid-template-columns: repeat(4, 97px); grid-auto-rows: 105px; margin-left: -1px; padding-top: 4px; }
.item { display: flex; flex-direction: column; align-items: center; }
.item svg { width: 48px; height: 48px; flex: none; margin-left: -1px; }
.item span { margin-left: -1px; font-size: 12px; line-height: 15px; letter-spacing: -.32px; text-align: center; white-space: nowrap; color: #fff; text-shadow: 1px 1px 1px #000, 1px 1px 2px #000, 1px 2px 3px #000, 0 0 2px #0009; }
.wordmark { font: bold 14px "Open Sans", sans-serif; fill: #fff; }
.skype { font: bold 33px "Open Sans", sans-serif; fill: #fff; }

.window { position: absolute; left: 276px; top: 25px; width: 800px; height: 672px; display: flex; flex-direction: column; align-items: stretch; background: #fff; box-shadow: 0 0 0 1px #c4c4c4, 0 4px 14px 2px #0006; }
.titlebar { height: 29px; display: flex; align-items: center; padding: 0 14px 0 8px; }
.title { margin-left: 5px; font-size: 12px; letter-spacing: -.32px; color: #000; }
.controls { margin-left: auto; }
.menu { height: 22px; display: flex; align-items: center; padding: 0 0 1px 8px; font-size: 12px; color: #000; letter-spacing: -.18px; }
.menu span { white-space: nowrap; }
.m1 { width: 61px; } .m2 { width: 63px; } .m3 { width: 65px; } .m4 { width: 59px; } .m5 { width: 79px; }
.panel { height: 28px; display: flex; align-items: center; justify-content: flex-end; gap: 15px; padding: 2px 7px 0 0; background: linear-gradient(#5b5a54, #3c3b37); }
.lang { width: 20px; height: 20px; margin: 0 -3px 0 -1px; border-radius: 2px; background: #dfdbd2; color: #4a4944; font: 600 12px/21px "Open Sans", sans-serif; text-align: center; }
.installer { height: 97px; padding: 3px 22px; border-top: 2px solid #605f59; background: linear-gradient(#4b4a45, #3c3b37 28px); color: #dfdbd2; }
.installer h1 { margin: 0; font: 700 14px/20px "Noto Sans", sans-serif; letter-spacing: .1px; }
.installer h2 { margin: 21px 0 0; font: 400 25px/34px "Noto Sans", sans-serif; letter-spacing: -.5px; }
.map { display: block; flex: none; margin-left: 1px; }
.zones path { fill: none; stroke: #6d81a6; stroke-width: .7; }
.borders path { fill: none; stroke: #999; stroke-width: 1.300; }
.form { height: 100px; margin-left: 1px; padding: 13px 20px 0 21px; background: #f2f1f0; }
.field { height: 27px; border: 1px solid #aaa49d; border-radius: 4px; background: #fff; box-shadow: inset 0 1px 2px #0002; padding-left: 6px; font: 14.500px/25px "Noto Sans", sans-serif; letter-spacing: -.1px; color: #3c3c3c; }
.actions { display: flex; justify-content: flex-end; gap: 8px; margin-top: 12px; }
.actions button { width: 115px; height: 27px; padding: 0; border: 1px solid #aaa49d; border-radius: 4px; background: linear-gradient(#fbfbfa, #e9e8e6); font: 14.500px/24px "Noto Sans", sans-serif; letter-spacing: .1px; color: #3c3c3c; }
.actions .off { background: #efeeed; border-color: #c6c2bd; color: #9b9a98; }
.dark { height: 33px; margin-left: 1px; background: #3c3b37; }
.status { flex: 1; display: flex; align-items: center; justify-content: flex-end; gap: 5px; padding-right: 2px; background: #f0f0f0; font-size: 11.500px; letter-spacing: -.5px; }
.status svg { width: 16px; height: 16px; flex: none; }
.status span { width: 66px; margin-right: 3px; margin-left: -1px; white-space: nowrap; }
.status .grip { width: 9px; height: 9px; align-self: flex-end; margin-bottom: 2px; margin-left: -1px; }

.taskbar { position: relative; height: 30px; background: #212121; display: flex; align-items: stretch; }
.tb { width: 37px; display: flex; align-items: center; justify-content: center; }
.tb:first-child { width: 35px; }
.tb.active { width: 36px; margin-left: 1px; background: #4c4c4c; border-bottom: 2px solid #76b9ed; border-right: 2px solid #3a4248; }
.tray { margin-left: auto; display: flex; align-items: center; gap: 9px; padding-right: 31px; }
.tray time { margin-left: 20px; margin-top: -3px; font-size: 12px; letter-spacing: -.55px; color: #fff; }
.taskbar::after { content: ""; position: absolute; right: 4px; top: 0; width: 1px; height: 30px; background: #777; }
```
